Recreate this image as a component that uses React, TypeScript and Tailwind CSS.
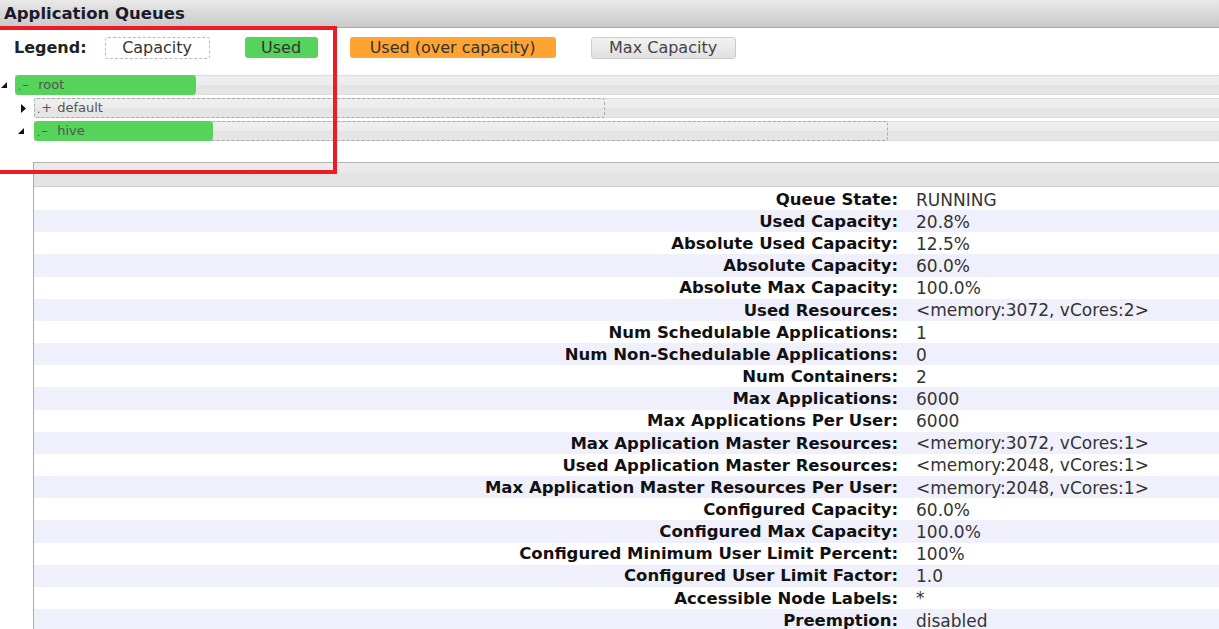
import React from 'react'

const ROWS: [string, string][] = [
  ['Queue State:', 'RUNNING'],
  ['Used Capacity:', '20.8%'],
  ['Absolute Used Capacity:', '12.5%'],
  ['Absolute Capacity:', '60.0%'],
  ['Absolute Max Capacity:', '100.0%'],
  ['Used Resources:', '<memory:3072, vCores:2>'],
  ['Num Schedulable Applications:', '1'],
  ['Num Non-Schedulable Applications:', '0'],
  ['Num Containers:', '2'],
  ['Max Applications:', '6000'],
  ['Max Applications Per User:', '6000'],
  ['Max Application Master Resources:', '<memory:3072, vCores:1>'],
  ['Used Application Master Resources:', '<memory:2048, vCores:1>'],
  ['Max Application Master Resources Per User:', '<memory:2048, vCores:1>'],
  ['Configured Capacity:', '60.0%'],
  ['Configured Max Capacity:', '100.0%'],
  ['Configured Minimum User Limit Percent:', '100%'],
  ['Configured User Limit Factor:', '1.0'],
  ['Accessible Node Labels:', '*'],
  ['Preemption:', 'disabled'],
]

const Arrow = ({ open }: { open: boolean }) =>
  open ? (
    <svg width="6" height="6" viewBox="0 0 6 6" className="block">
      <polygon points="6,0 6,6 0,6" fill="#111" />
    </svg>
  ) : (
    <svg width="5" height="9" viewBox="0 0 5 9" className="block">
      <polygon points="0,0 5,4.5 0,9" fill="#111" />
    </svg>
  )

const QueueBar = ({
  label,
  sign,
  used,
  capacity,
}: {
  label: string
  sign: string
  used: number
  capacity?: number
}) => (
  <div className="relative h-[20px] flex-1 border-y border-[#dcdcdc] bg-[linear-gradient(#efefef_0%,#ececec_50%,#e4e4e4_51%,#e6e6e6_100%)]">
    {capacity ? (
      <div
        className="absolute -top-px -bottom-px left-0 rounded-[3px] border border-dashed border-[#aaa]"
        style={{ width: capacity }}
      />
    ) : null}
    <div
      className="absolute -top-px -bottom-px left-0 rounded-[4px] bg-[#55d35a]"
      style={{ width: used }}
    />
    <div className="absolute inset-0 flex items-center pl-[3px] text-[13px] text-[#555]">
      <span className="mt-[4px] text-[10px] leading-none">.</span>
      <span className="ml-[1px] w-[13px]">{sign}</span>
      <span className="ml-[3px]">{label}</span>
    </div>
  </div>
)

export default function App() {
  return (
    <div className="relative w-[1219px] h-[629px] overflow-hidden bg-white font-['DejaVu_Sans',Verdana,sans-serif] text-[#222]">
      <div className="h-[28px] border-b border-[#a8a8a8] bg-[linear-gradient(#e9e9e9,#c9c9c9)] pl-[4px] text-[16.5px] font-bold leading-[28px] text-[#1a1a2a]">
        Application Queues
      </div>

      <div className="flex h-[37px] items-center pl-[14px] pt-[2px] text-[16px]">
        <span className="font-bold text-[#222]">Legend:</span>
        <span className="ml-[18px] flex h-[22px] w-[105px] items-center justify-center rounded-[3px] border border-dashed border-[#bbb] text-[#333]">
          Capacity
        </span>
        <span className="ml-[35px] flex h-[21px] w-[73px] items-center justify-center rounded-[3px] bg-[#55d35a] text-[#333]">
          Used
        </span>
        <span className="ml-[32px] flex h-[21px] w-[206px] items-center justify-center rounded-[3px] bg-[#ffa333] text-[#333]">
          Used (over capacity)
        </span>
        <span className="ml-[35px] flex h-[22px] w-[145px] items-center justify-center rounded-[3px] border border-[#ccc] bg-[linear-gradient(#f2f2f2,#e0e0e0)] text-[#444]">
          Max Capacity
        </span>
      </div>

      <div className="mt-[10px] flex flex-col gap-[3px]">
        <div className="flex items-center">
          <div className="w-[15px] pl-[1px]">
            <Arrow open />
          </div>
          <QueueBar label="root" sign="–" used={181} />
        </div>
        <div className="flex items-center">
          <div className="w-[34px] pl-[21px]">
            <Arrow open={false} />
          </div>
          <QueueBar label="default" sign="+" used={0} capacity={571} />
        </div>
        <div className="flex items-center">
          <div className="w-[34px] pl-[18px]">
            <Arrow open />
          </div>
          <QueueBar label="hive" sign="–" used={179} capacity={854} />
        </div>
      </div>

      <div className="ml-[33px] mt-[21px] border-l border-[#aaa]">
        <div className="h-[25px] border-y border-[#b4b4b4] border-b-[#d0d0d0] bg-[linear-gradient(#ececec_0%,#e9e9e9_40%,#e2e2e2_45%,#e4e4e4_100%)]" />
        <div className="pt-[1px]">
          {ROWS.map(([label, value], i) => (
            <div
              key={label}
              className={`grid h-[22.16px] grid-cols-[864px_1fr] items-center pt-[2px] leading-none ${
                i % 2 === 1 ? 'bg-[#f0f0fc]' : 'bg-white'
              }`}
            >
              <div className="text-right text-[16.5px] font-bold text-[#111]">{label}</div>
              <div className="pl-[18px] text-[17px] text-[#333]">{value}</div>
            </div>
          ))}
        </div>
      </div>

      <div className="pointer-events-none absolute left-[-10px] top-[26px] h-[148px] w-[347px] border-[4px] border-[#ec1c24]" />
    </div>
  )
}
